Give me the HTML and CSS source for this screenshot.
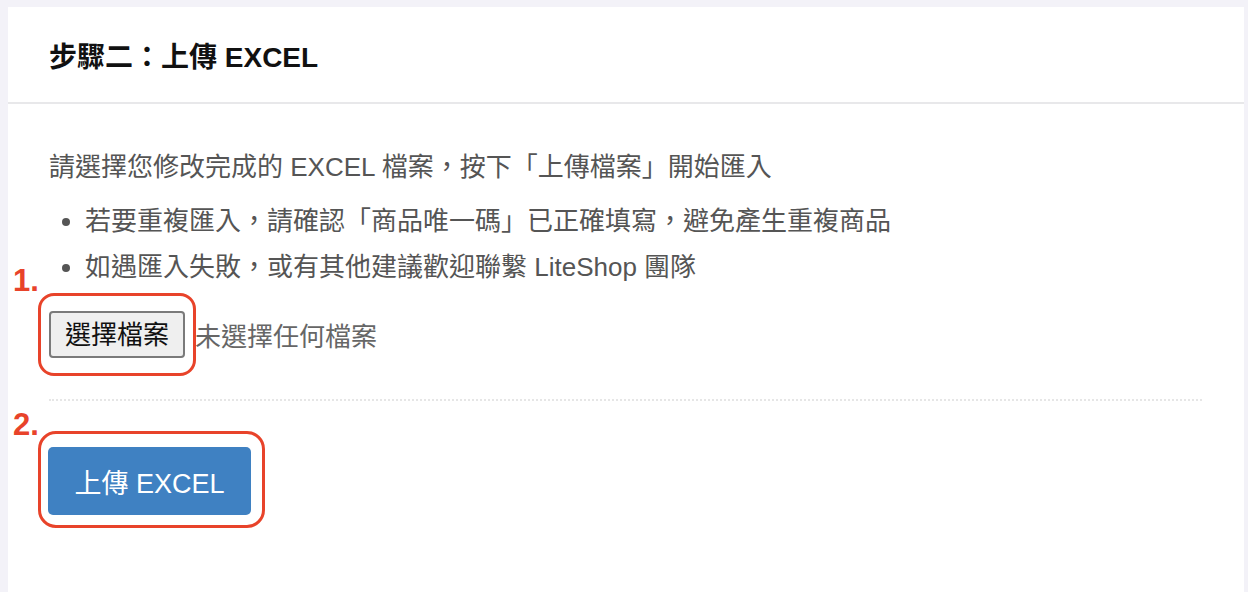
FILE: index.html
```html
<!DOCTYPE html>
<html lang="zh-Hant">
<head>
    <meta charset="utf-8">
    <title>步驟二：上傳 EXCEL</title>
    <link rel="stylesheet" href="styles.css">
</head>
<body>
    <div class="card">
        <div class="card-header">步驟二：上傳 EXCEL</div>
        <div class="card-body">
            <p class="intro">請選擇您修改完成的 EXCEL 檔案，按下「上傳檔案」開始匯入</p>
            <ul class="notes">
                <li>若要重複匯入，請確認「商品唯一碼」已正確填寫，避免產生重複商品</li>
                <li>如遇匯入失敗，或有其他建議歡迎聯繫 LiteShop 團隊</li>
            </ul>
            <div class="file-row">
                <button class="file-btn" type="button">選擇檔案</button>
                <span class="file-name">未選擇任何檔案</span>
            </div>
            <div class="divider"></div>
            <button class="upload-btn" type="button">上傳 EXCEL</button>

            <!-- 標註 -->
            <span class="mark-num num-1">1.</span>
            <span class="mark-box box-1"></span>
            <span class="mark-num num-2">2.</span>
            <span class="mark-box box-2"></span>
        </div>
    </div>
</body>
</html>
```

FILE: styles.css
```css
html, body {
    margin: 0;
    height: 100%;
}

body {
    padding: 7px 4px 0 8px;
    box-sizing: border-box;
    background-color: #f3f2f8;
    font-family: "Liberation Sans", "Noto Sans CJK TC", sans-serif;
    overflow: hidden;
}

.card {
    background-color: #fff;
    height: 100%;
}

.card-header {
    height: 95px;
    display: flex;
    align-items: center;
    padding: 0 41px 0;
    border-bottom: 2px solid #e8e8ea;
    font-size: 28px;
    font-weight: bold;
    color: #111;
}

.card-body {
    position: relative;
    padding: 40px 42px 0 41px;
    color: #555;
    font-size: 26px;
}

.intro {
    margin: 0;
    line-height: 46px;
}

.notes {
    margin: 8px 0 0;
    padding-left: 36px;
    line-height: 46px;
}

.file-row {
    margin-top: 21px;
    display: flex;
    align-items: center;
}

.file-btn {
    font-family: inherit;
    font-size: 26px;
    color: #111;
    background-color: #efefef;
    border: 2px solid #7a7a7a;
    border-radius: 4px;
    height: 47px;
    width: 136px;
    padding: 0;
    line-height: 1;
}

.file-name {
    margin-left: 10px;
    color: #666;
}

.divider {
    margin-top: 41px;
    border-top: 2px dotted #e6e6e6;
}

.upload-btn {
    display: block;
    margin-top: 46px;
    margin-left: -1px;
    width: 203px;
    height: 68px;
    border: none;
    border-radius: 5px;
    background-color: #3f81c2;
    color: #fff;
    font-family: inherit;
    font-size: 27px;
}

/* 紅色標註 */
.mark-num {
    position: absolute;
    left: 5px;
    color: #e8432a;
    font-size: 31px;
    font-weight: bold;
    line-height: 1;
}

.num-1 { top: 161px; }
.num-2 { top: 305px; }

.mark-box {
    position: absolute;
    border: 3px solid #e8432a;
    box-sizing: border-box;
}

.box-1 {
    left: 30px;
    top: 189px;
    width: 158px;
    height: 83px;
    border-radius: 16px;
}

.box-2 {
    left: 30px;
    top: 327px;
    width: 227px;
    height: 97px;
    border-radius: 18px;
}
```
